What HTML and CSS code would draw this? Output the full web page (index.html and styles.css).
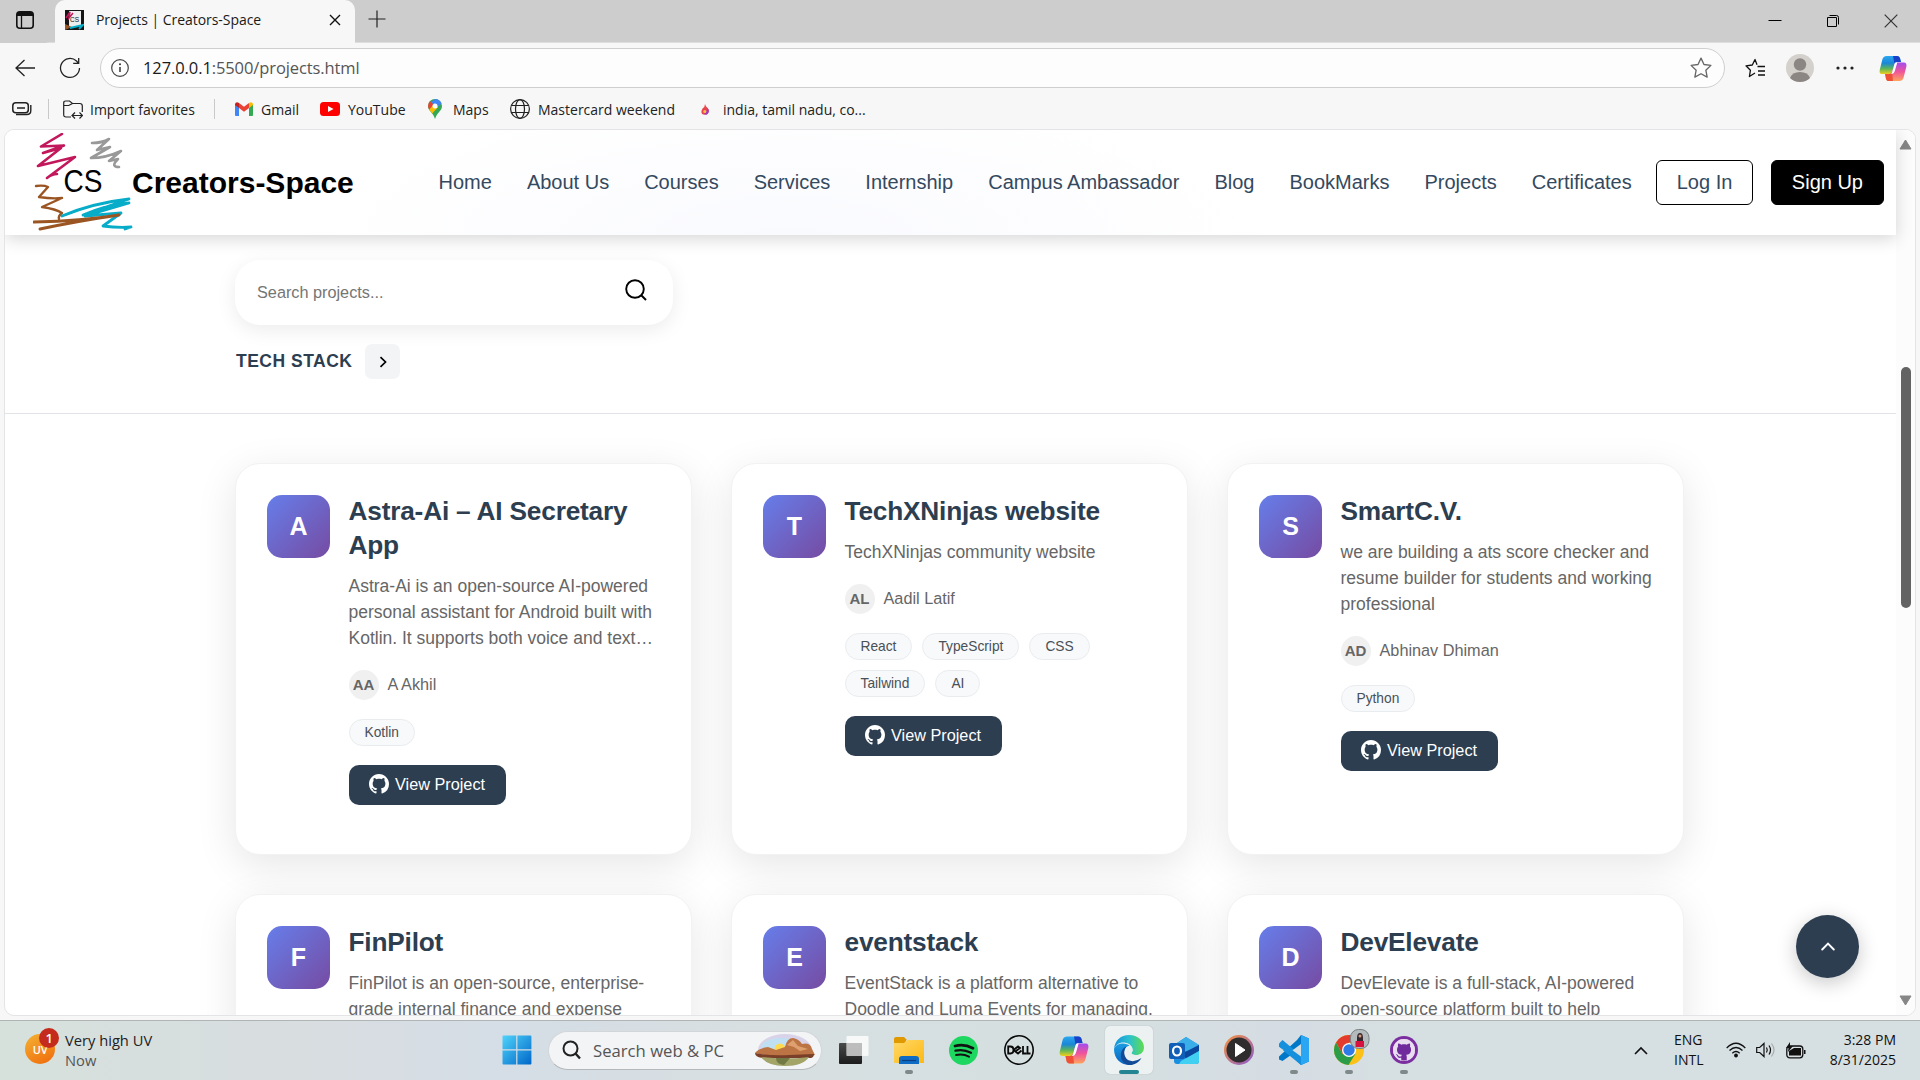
FILE: index.html
```html
<!DOCTYPE html>
<html lang="en">
<head>
<meta charset="utf-8">
<title>Projects | Creators-Space</title>
<link rel="stylesheet" href="styles.css">
</head>
<body>
<svg class="defs" aria-hidden="true">
  <defs>
    <linearGradient id="cpA" x1="0" y1="0" x2="0" y2="1"><stop offset="0" stop-color="#2aa8f0"/><stop offset=".4" stop-color="#1a86d8"/><stop offset=".7" stop-color="#5bb55a"/><stop offset="1" stop-color="#f2cf1c"/></linearGradient>
    <linearGradient id="cpB" x1="0" y1="0" x2="0" y2="1"><stop offset="0" stop-color="#a24bf0"/><stop offset=".5" stop-color="#f0559a"/><stop offset="1" stop-color="#ffa45c"/></linearGradient>
    <linearGradient id="win" x1="0" y1="0" x2="1" y2="1"><stop offset="0" stop-color="#4fd3fb"/><stop offset="1" stop-color="#0067c8"/></linearGradient>
    <linearGradient id="edgeTop" x1="0" y1="0" x2="1" y2="0"><stop offset="0" stop-color="#1490dc"/><stop offset=".5" stop-color="#2bc0d0"/><stop offset="1" stop-color="#5fdc4e"/></linearGradient>
    <linearGradient id="edgeL" x1="0" y1="0" x2="0" y2="1"><stop offset="0" stop-color="#1b9de2"/><stop offset="1" stop-color="#0a62c0"/></linearGradient>
    <linearGradient id="media" x1="0" y1="0" x2="1" y2="1"><stop offset="0" stop-color="#f7933c"/><stop offset="1" stop-color="#8a5ad0"/></linearGradient>
    <linearGradient id="folder" x1="0" y1="0" x2="1" y2="1"><stop offset="0" stop-color="#ffd968"/><stop offset="1" stop-color="#fdb813"/></linearGradient>
    <linearGradient id="tv" x1="0" y1="0" x2="0" y2="1"><stop offset="0" stop-color="#4a4a4a"/><stop offset="1" stop-color="#1c1c1c"/></linearGradient>
  </defs>
  <symbol id="github" viewBox="0 0 16 16"><path d="M8 0C3.58 0 0 3.58 0 8c0 3.54 2.29 6.53 5.47 7.59.4.07.55-.17.55-.38 0-.19-.01-.82-.01-1.49-2.01.37-2.53-.49-2.69-.94-.09-.23-.48-.94-.82-1.13-.28-.15-.68-.52-.01-.53.63-.01 1.08.58 1.23.82.72 1.21 1.87.87 2.33.66.07-.52.28-.87.51-1.07-1.78-.2-3.64-.89-3.64-3.95 0-.87.31-1.59.82-2.15-.08-.2-.36-1.02.08-2.12 0 0 .67-.21 2.2.82.64-.18 1.32-.27 2-.27s1.36.09 2 .27c1.53-1.04 2.2-.82 2.2-.82.44 1.1.16 1.92.08 2.12.51.56.82 1.27.82 2.15 0 3.07-1.87 3.75-3.65 3.95.29.25.54.73.54 1.48 0 1.07-.01 1.93-.01 2.2 0 .21.15.46.55.38A8.01 8.01 0 0 0 16 8c0-4.42-3.58-8-8-8z" fill="currentColor"/></symbol>
  <symbol id="copilot" viewBox="0 0 30 28"><path d="M8.500.5h11c1.600 0 2.600 1 3 2.500L23.500 7h-3c-2.200 0-3.500 1-4 3l-2.200 7.500c-.6 2-1.800 2.500-3.500 2.500H3.500C1 20 .2 18.200.8 15.500L3.500 4.500C4.100 2 5.500.5 8.500.5z" fill="url(#cpA)"/><path d="M15 .5h4.500c1.600 0 2.600 1 3 2.500L23.500 7h-3c-2 0-3.200.8-3.800 2.300z" fill="#1a3fc9"/><path d="M21.500 27.500h-11c-1.600 0-2.600-1-3-2.500L6.500 20h3.500c2.200 0 3.300-.5 4-2.500l2.300-7.500c.6-2 1.800-2.500 3.500-2.500h6.700c2.500 0 3.400 1.800 2.800 4.500l-2.800 11c-.6 2.500-2 4.500-5 4.500z" fill="url(#cpB)"/><path d="M15 27.500h-4.500c-1.600 0-2.600-1-3-2.500L6.500 20h3.500c2 0 3.300-.4 4-2z" fill="#ee5136"/><path d="M16.800 8.500c.5-1 1.500-1.200 2.900-1.200L17 16.500c-.8 2.500-2 3.600-4.500 3.500 1-.5 1.300-1.300 1.600-2.300z" fill="#fff"/></symbol>
  <symbol id="logo" viewBox="0 0 100 98"><g fill="none" stroke-linejoin="round" stroke-linecap="round"><path d="M29 1 8 13.500 31 12.500 10 20l18-5L5 33l37-9-28 21q5-4 10-4" stroke="#c2185b" stroke-width="2.600"/><path d="M59 10q10 0 17-4L64 17l13-3-19 11q15 0 30-7L76 28l9-2q-8 8 1 8" stroke="#999" stroke-width="2.600"/><path d="M3 53q8-1 12 1L6 64q13 2 23 1L9 74q14 2 20 6-4 3-3 6" stroke="#9b5523" stroke-width="2.400"/><path d="M29 83Q60 70 96 66L50 82Q74 72 96 70L52 83 88 80 70 93q15 2 28 1l-6 2" stroke="#07acc8" stroke-width="2.800"/><path d="M1 89Q50 88 86 82 45 88 7 96" stroke="#9b5523" stroke-width="2.900"/></g></symbol>
  <symbol id="star" viewBox="0 0 20 20"><path d="m10 1 2.700 5.800 6.300.8-4.600 4.400 1.200 6.300L10 15.200l-5.600 3.100L5.600 12 1 7.600l6.300-.8z" fill="none" stroke="currentColor" stroke-width="1.200" stroke-linejoin="round"/></symbol>
</svg>

<div class="tabstrip">
  <div class="tab-actions"><svg width="18" height="18" viewBox="0 0 18 18"><rect x=".8" y=".8" width="16.400" height="16.400" rx="3" fill="none" stroke="#111" stroke-width="1.600"/><path d="M1 5V3q0-2 2-2h12q2 0 2 2v2z" fill="#111"/><path d="M5.500 5v12" stroke="#111" stroke-width="1.300"/></svg></div>
  <div class="tab">
    <svg class="favicon" width="19" height="20" viewBox="0 0 19 20"><rect width="19" height="20" fill="#151515"/><rect x="4" y="1" width="12" height="16" fill="#eee"/><path d="M1 8 5 2l-1 6 4-5" stroke="#c2185b" stroke-width="1.500" fill="none"/><path d="m0 14 7 3-7 3z" fill="#9b5523"/><path d="m5 18 13-3-4 4" stroke="#07acc8" stroke-width="1.800" fill="none"/><text x="5" y="12" class="fav-text">CS</text></svg>
    <span class="tab-title">Projects | Creators-Space</span>
    <svg class="tab-close" width="12" height="12" viewBox="0 0 12 12"><path d="m1 1 10 10M11 1 1 11" stroke="#111" stroke-width="1.400"/></svg>
  </div>
  <svg class="new-tab" width="18" height="18" viewBox="0 0 18 18"><path d="M9 .5v17M.5 9h17" stroke="#222" stroke-width="1.200"/></svg>
  <div class="window-buttons">
    <svg width="14" height="14" viewBox="0 0 14 14"><path d="M.5 6.500h13" stroke="#000" stroke-width="1"/></svg>
    <svg width="14" height="14" viewBox="0 0 14 14"><path d="M1.500 3.500h9v9h-9z" fill="none" stroke="#000"/><path d="M3.500 1.500h7q2 0 2 2v7" fill="none" stroke="#000"/></svg>
    <svg width="14" height="14" viewBox="0 0 14 14"><path d="m.7.700 12.600 12.600M13.300.7.7 13.300" stroke="#333" stroke-width="1.200"/></svg>
  </div>
</div>

<div class="toolbar">
  <svg class="back" width="20" height="18" viewBox="0 0 20 18"><path d="M9.500 1 1 9l8.500 8M1 9h19" fill="none" stroke="#222" stroke-width="1.300"/></svg>
  <svg class="reload" width="22" height="22" viewBox="0 0 22 22"><path d="M20.500 11a9.500 9.500 0 1 1-3-7l2 2.200M19.700 1v5.300h-5.500" fill="none" stroke="#222" stroke-width="1.300"/></svg>
  <div class="address">
    <svg width="18" height="18" viewBox="0 0 18 18"><circle cx="9" cy="9" r="8.300" fill="none" stroke="#444" stroke-width="1.200"/><path d="M9 8v5" stroke="#333" stroke-width="1.500"/><circle cx="9" cy="5.300" r="1" fill="#333"/></svg>
    <span class="url"><b>127.0.0.1</b>:5500/projects.html</span>
    <svg class="fav-star" width="22" height="22"><use href="#star"/></svg>
  </div>
  <svg class="favorites" width="20" height="20" viewBox="0 0 20 20"><path d="M12 6.800 10 1.500 7.300 7 1 7.800l4.400 4.500-1 6.200L10 15M12.500 8.500H20M13 13h7M13 17h7" fill="none" stroke="#111" stroke-width="1.300" stroke-linejoin="round"/></svg>
  <svg class="profile" width="28" height="28" viewBox="0 0 28 28"><circle cx="14" cy="14" r="14" fill="#d4d1cd"/><circle cx="14" cy="10.500" r="6.200" fill="#8b8683"/><path d="M4 24q2-6 10-6t10 6q-4 4-10 4T4 24z" fill="#8b8683"/></svg>
  <svg class="dots" width="18" height="4" viewBox="0 0 18 4"><g fill="#222"><circle cx="2" cy="2" r="1.600"/><circle cx="9" cy="2" r="1.600"/><circle cx="16" cy="2" r="1.600"/></g></svg>
  <svg width="28" height="27"><use href="#copilot"/></svg>
</div>

<div class="bookmarks">
  <svg class="bm-first" width="20" height="14" viewBox="0 0 20 14"><rect x=".8" y=".8" width="15.500" height="10" rx="3" fill="none" stroke="#222" stroke-width="1.500"/><path d="M5 6h8M18.800 3v5.500q0 4-4 4H4" fill="none" stroke="#222" stroke-width="1.400"/></svg>
  <i class="sep"></i>
  <div class="bm bm-import"><svg width="20" height="19" viewBox="0 0 20 19"><path d="M8 17H3q-2.300 0-2.300-2.300V3Q.7 1 2.700 1h3.800l3 2.500h7.300q2.500 0 2.500 2.500v6M.7 5.500h5L9.500 3.500M9 15.500h10M12 12.500l-3 3 3 3M16.500 12.500l3 3-3 3" fill="none" stroke="#222" stroke-width="1.200"/></svg><span>Import favorites</span></div>
  <i class="sep"></i>
  <div class="bm bm-gmail"><svg width="18" height="14" viewBox="0 0 18 14"><path d="M0 2v11q0 1 1 1h3V5z" fill="#4285f4"/><path d="M18 2v11q0 1-1 1h-3V5z" fill="#34a853"/><path d="M14 1v5l4-3V2q-1-3-4-1z" fill="#fbbc04"/><path d="M4 6V1q-3-2-4 1v1z" fill="#c5221f"/><path d="M4 1v5l5 3.800L14 6V1L9 4.800z" fill="#ea4335"/></svg><span>Gmail</span></div>
  <div class="bm bm-youtube"><svg width="20" height="14" viewBox="0 0 20 14"><rect width="20" height="14" rx="3.500" fill="#f00"/><path d="m8 4 5.500 3L8 10z" fill="#fff"/></svg><span>YouTube</span></div>
  <div class="bm bm-maps"><svg width="14" height="20" viewBox="0 0 14 20"><path d="M7 0a7 7 0 0 0-7 7c0 5 5 6 7 13 2-7 7-8 7-13a7 7 0 0 0-7-7z" fill="#34a853"/><path d="M7 0a7 7 0 0 1 6.500 4.500L8 9 3 3z" fill="#4285f4"/><path d="M2 2.300 6 6 1.500 11Q-1.500 6 2 2.300z" fill="#ea4335"/><path d="m1.200 10.500 5-5.500 4 3-6 6.500z" fill="#fbbc04"/><circle cx="7" cy="7" r="2.500" fill="#fff"/></svg><span>Maps</span></div>
  <div class="bm bm-master"><svg width="20" height="20" viewBox="0 0 20 20"><g fill="none" stroke="#222" stroke-width="1.200"><circle cx="10" cy="10" r="9.400"/><ellipse cx="10" cy="10" rx="4.500" ry="9.400"/><path d="M1.500 6.500h17M1.500 13.500h17"/></g></svg><span>Mastercard weekend</span></div>
  <div class="bm bm-india"><svg width="8" height="11" viewBox="0 0 8 11"><path d="M4 0q0 3-2.500 4.500Q-1 9 2 10.500h4Q9.500 7 6.500 4 4.500 2.500 4 0z" fill="#e8454e"/><path d="M6.500 4Q9.500 7 6 10.500H3q3-3 3.500-6.500z" fill="#a03ac0"/><circle cx="3.800" cy="7.500" r="1.500" fill="#ffc247"/></svg><span>india, tamil nadu, co...</span></div>
</div>

<div class="viewport">
  <div class="page">
    <header class="site-header">
      <svg class="brand-logo" width="100" height="98"><use href="#logo"/><text x="30.500" y="59" class="brand-cs" textLength="39" lengthAdjust="spacingAndGlyphs">CS</text></svg>
      <span class="brand">Creators-Space</span>
      <nav class="nav"><a>Home</a><a>About Us</a><a>Courses</a><a>Services</a><a>Internship</a><a>Campus Ambassador</a><a>Blog</a><a>BookMarks</a><a>Projects</a><a>Certificates</a></nav>
      <a class="btn-login">Log In</a>
      <a class="btn-signup">Sign Up</a>
    </header>

    <section class="filters">
      <div class="search"><span>Search projects...</span><svg width="22" height="22" viewBox="0 0 22 22"><circle cx="10" cy="10" r="8.800" fill="none" stroke="#000" stroke-width="1.900"/><path d="m16 16 5 5" stroke="#000" stroke-width="1.900"/></svg></div>
      <div class="stack"><span>TECH STACK</span><div class="stack-toggle"><svg width="8" height="12" viewBox="0 0 8 12"><path d="m1.500 1.200 5 4.800-5 4.800" fill="none" stroke="#000" stroke-width="1.700"/></svg></div></div>
    </section>

    <main class="grid">
      <article class="card">
        <div class="letter">A</div>
        <div class="info">
          <h3>Astra-Ai – AI Secretary App</h3>
          <p>Astra-Ai is an open-source AI-powered<br>personal assistant for Android built with<br>Kotlin. It supports both voice and text…</p>
          <div class="author"><b>AA</b><span>A Akhil</span></div>
          <div class="tags"><span>Kotlin</span></div>
          <a class="view"><svg width="20" height="20"><use href="#github"/></svg>View Project</a>
        </div>
      </article>
      <article class="card">
        <div class="letter">T</div>
        <div class="info">
          <h3>TechXNinjas website</h3>
          <p>TechXNinjas community website</p>
          <div class="author"><b>AL</b><span>Aadil Latif</span></div>
          <div class="tags"><span>React</span><span>TypeScript</span><span>CSS</span><span>Tailwind</span><span>AI</span></div>
          <a class="view"><svg width="20" height="20"><use href="#github"/></svg>View Project</a>
        </div>
      </article>
      <article class="card">
        <div class="letter">S</div>
        <div class="info">
          <h3>SmartC.V.</h3>
          <p>we are building a ats score checker and<br>resume builder for students and working<br>professional</p>
          <div class="author"><b>AD</b><span>Abhinav Dhiman</span></div>
          <div class="tags"><span>Python</span></div>
          <a class="view"><svg width="20" height="20"><use href="#github"/></svg>View Project</a>
        </div>
      </article>
      <article class="card">
        <div class="letter">F</div>
        <div class="info"><h3>FinPilot</h3><p>FinPilot is an open-source, enterprise-<br>grade internal finance and expense</p></div>
      </article>
      <article class="card">
        <div class="letter">E</div>
        <div class="info"><h3>eventstack</h3><p>EventStack is a platform alternative to<br>Doodle and Luma Events for managing.</p></div>
      </article>
      <article class="card">
        <div class="letter">D</div>
        <div class="info"><h3>DevElevate</h3><p>DevElevate is a full-stack, AI-powered<br>open-source platform built to help</p></div>
      </article>
    </main>
  </div>
  <div class="scrollbar">
    <svg width="13" height="11" viewBox="0 0 13 11"><path d="M6.500 1 12 10H1z" fill="#868686" stroke="#868686" stroke-linejoin="round"/></svg>
    <i class="thumb"></i>
    <svg width="13" height="11" viewBox="0 0 13 11"><path d="M6.500 10 12 1H1z" fill="#868686" stroke="#868686" stroke-linejoin="round"/></svg>
  </div>
  <div class="to-top"><svg width="14" height="9" viewBox="0 0 14 9"><path d="m1.200 7.500 5.800-6 5.800 6" fill="none" stroke="#fff" stroke-width="1.900" stroke-linecap="round"/></svg></div>
</div>

<footer class="taskbar">
  <div class="weather">
    <div class="uv">UV<b>1</b></div>
    <div class="weather-text"><span>Very high UV</span><small>Now</small></div>
  </div>
  <div class="slot"><svg width="30" height="30" viewBox="0 0 30 30"><path d="M1.500.5h12.700v13.700H.5V1.500q0-1 1-1zM15.400.5h13q1 0 1 1v12.700h-14zM.5 15.400h13.700v14H1.500q-1 0-1-1zM15.400 15.400h14v13q0 1-1 1h-13z" fill="url(#win)"/></svg></div>
  <div class="task-search">
    <svg width="19" height="20" viewBox="0 0 19 20"><circle cx="8.500" cy="8.500" r="7" fill="none" stroke="#222" stroke-width="2"/><path d="m13.500 13.500 4.500 5" stroke="#222" stroke-width="2.400"/></svg>
    <span>Search web &amp; PC</span>
    <svg width="62" height="32" viewBox="0 0 62 32"><ellipse cx="31" cy="16" rx="27" ry="16" fill="#d9d3ea"/><ellipse cx="27" cy="14" rx="20" ry="10" fill="#bfe0f3"/><circle cx="26" cy="15" r="5.500" fill="#ffd94f"/><path d="M1 19q4-5 13-6l8 3 9-3q2-9 8-9 6 1 9 6 8-2 10 5l3 6q-30 5-60-2z" fill="#bd7444"/><path d="m33 11 6-5 5 6 10 3-8 2-6-4z" fill="#dfa070"/><path d="M1 19q15 3 34 2l25-1q0 3-3 4H8q-7-1-7-5z" fill="#7a3f28"/><path d="M7 23q24 3 48 0-6 9-24 9T7 23z" fill="#a2a468"/><path d="m22 24 14 0-6 7q-8-1-8-7z" fill="#717a45"/></svg>
  </div>
  <div class="slot"><svg width="30" height="28" viewBox="0 0 30 28"><rect y="7" width="23" height="21" rx="1" fill="url(#tv)"/><rect x="7.500" y="0" width="22" height="20" rx="1" fill="#fff" fill-opacity=".8"/><path d="M7.500 7H23v13H7.500z" fill="#aaa" fill-opacity=".6"/></svg></div>
  <div class="slot running"><svg width="30" height="27" viewBox="0 0 30 27"><path d="M0 2q0-2 2-2h8l3 3h-1v6H0z" fill="#e09a00"/><path d="M0 6h10l3-3h16q1 0 1 1v22H1q-1 0-1-1z" fill="url(#folder)"/><path d="M5 27v-5q0-3 3-3h14q3 0 3 3v5z" fill="#0f6cc4"/><path d="M8 23.500h14" stroke="#0a3e85" stroke-width="1.200"/></svg></div>
  <div class="slot"><svg width="29" height="29" viewBox="0 0 29 29"><circle cx="14.500" cy="14.500" r="14.500" fill="#1ed760"/><g fill="none" stroke="#111" stroke-linecap="round"><path d="M6 10q9-2.500 18 2.200" stroke-width="2.800"/><path d="M6.500 14.700q8-2 15.500 2" stroke-width="2.300"/><path d="M7 19q7-1.700 13 1.700" stroke-width="1.900"/></g></svg></div>
  <div class="slot"><svg width="30" height="30" viewBox="0 0 30 30"><circle cx="15" cy="15" r="14.200" fill="none" stroke="#0a0a0a" stroke-width="1.600"/><g fill="none" stroke="#0a0a0a" stroke-width="1.800"><path d="M4.200 11.500h2.300q3 0 3 3.500t-3 3.500H4.200z"/><path d="m9.500 15 4.500-3.500 2 1.500-4 3M9.500 15l4.500 3.500 3.500-3M19 11v7.500h3.500M23.500 11v7.500h3"/></g></svg></div>
  <div class="slot"><svg width="30" height="28"><use href="#copilot"/></svg></div>
  <div class="slot active"><svg width="30" height="30" viewBox="0 0 30 30"><path d="M0 14C1 5 7 0 15 0c9 0 15 6 15 12.500 0 5-4 7.500-8 7.500-3 0-5-1-4.500-2.500 1-1 1.500-2 1-4C17.500 9.500 13 7.500 9 7.500 5 7.500 1.500 10 0 14z" fill="url(#edgeTop)"/><path d="M0 14c1.500-4 5-5.500 9-5.500 3 0 5 1 6.500 2.200C12 11 10 14.500 10 18c0 6 4 10.500 9 11.300C9 32 0 25 0 14z" fill="url(#edgeL)"/><path d="M12.500 11.500C9 15 9.500 22 14 25q6 3 13.500-2C25 27.500 20 30 16 30 10 29.500 6 25 7 18.500c.5-3.500 2.500-6 5.500-7z" fill="#114b98"/><path d="M13.500 12.200q4.500-.8 5 2.300.2 2-1.200 3.500.5 2 4.500 2.200 2.500 0 5-.8-3.500 4.500-8 3.400-4.800-1.300-6.300-5.500-.8-3 1-5.100z" fill="#e9efef"/></svg></div>
  <div class="slot"><svg width="30" height="27" viewBox="0 0 30 27"><path d="M5 8 17 0l13 8v16q0 3-3 3H8q-3 0-3-3z" fill="#1a8fe0"/><path d="m17 0 13 8-12 7L5 8z" fill="#3aaee8"/><path d="m14 16 16-8v6L17 22z" fill="#0b479c"/><path d="m12 24 18-10v10q0 3-3 3H10z" fill="#41d0f2"/><rect y="6" width="16" height="16" rx="2" fill="#0f5fb8"/><ellipse cx="8" cy="14" rx="4" ry="4.500" fill="none" stroke="#fff" stroke-width="2.200"/></svg></div>
  <div class="slot"><svg width="30" height="30" viewBox="0 0 30 30"><circle cx="15" cy="15" r="15" fill="url(#media)"/><circle cx="15" cy="15" r="12.500" fill="#2e2c2c"/><path d="m11.500 8.500 9.500 6.500-9.500 6.500z" fill="#fff" stroke="#fff" stroke-linejoin="round"/></svg></div>
  <div class="slot running"><svg width="30" height="30" viewBox="0 0 30 30"><path d="M22 0 30 3.500v23L22 30 12 20 3.500 26 0 24.500v-3L18 5z" fill="#0078c8"/><path d="M0 8.500 3.500 5 22 20.500V30L0 12z" fill="#1590dd"/><path d="M22 0 30 3.500v23L22 30z" fill="#2ba6f2"/><path d="m22 9-8.500 6.200L22 21.500z" fill="#d6dfe1"/><path d="M0 12v8l4.500-5z" fill="#d6dfe1"/></svg></div>
  <div class="slot running"><svg class="chrome" width="30" height="30" viewBox="0 6 30 30"><circle cx="15" cy="21" r="15" fill="#fbc116"/><path d="M2 13.500A15 15 0 0 1 28 13.500H15L8.500 25z" fill="#e33b2e"/><path d="M2 13.500A15 15 0 0 0 14.500 36L21.500 24.700 8.500 25z" fill="#2b9c48"/><circle cx="15" cy="21" r="7" fill="#fff"/><circle cx="15" cy="21" r="5.700" fill="#2f7ce8"/><rect x="16.500" y=".5" width="18.500" height="19" rx="8" fill="#b4bbbd" stroke="#798084"/><path d="M23 17V9q0-5 3-5t3 5v8z" fill="#352a30"/><path d="M21.500 12h8.500v6h-8.500z" fill="#d8123f"/><circle cx="26" cy="7" r="1.500" fill="#d89a80"/></svg></div>
  <div class="slot running"><svg width="28" height="28" viewBox="0 0 28 28"><circle cx="14" cy="14" r="14" fill="#7a2ea0"/><circle cx="14" cy="14" r="11" fill="#e9def0"/><svg x="3" y="3" width="22" height="22" color="#e9def0"><circle cx="11" cy="11" r="10.500" fill="#6f2a9c"/><use href="#github"/></svg></svg></div>

  <div class="tray">
    <svg class="tray-up" width="14" height="9" viewBox="0 0 14 9"><path d="m1 8 6-6 6 6" fill="none" stroke="#111" stroke-width="1.600"/></svg>
    <div class="lang"><span>ENG</span><span>INTL</span></div>
    <svg class="wifi" width="20" height="16" viewBox="0 0 20 16"><g fill="none" stroke="#111" stroke-width="1.300"><path d="M.7 6Q10-3.500 19.300 6M3.500 8.500q6.500-6 13 0M6.300 11.200q3.700-3.400 7.400 0"/></g><circle cx="10" cy="13.500" r="1.900" fill="#111"/></svg>
    <svg class="volume" width="20" height="16" viewBox="0 0 20 16"><g fill="none" stroke="#111" stroke-width="1.200"><path d="M.7 5.500h3L8 1.500v13l-4.300-4h-3zM10.500 5.500q1.500 2.500 0 5M13 3.500q3 4.500 0 9"/><path d="M15.500 1.500q5 6.500 0 13" stroke="#aaa"/></g></svg>
    <svg class="battery" width="20" height="17" viewBox="0 0 20 17"><rect x=".8" y="4" width="16" height="11.800" rx="3" fill="none" stroke="#111" stroke-width="1.300"/><path d="M3 13.500V9l5-3h7v7.500zM18 8h1.500v4H18zM4 0 0 6h2.500L2 10l5-6H4z" fill="#111"/></svg>
    <div class="clock"><span>3:28 PM</span><span>8/31/2025</span></div>
  </div>
</footer>
</body>
</html>
```
FILE: styles.css
```css
* { box-sizing: border-box; }
body {
  margin: 0;
  width: 1920px;
  height: 1080px;
  overflow: hidden;
  display: flex;
  flex-direction: column;
  background: #f7f7f7;
  font-family: "Open Sans", "Noto Sans", sans-serif;
  color: #222;
}
svg { display: block; flex: none; }
.defs { position: absolute; width: 0; height: 0; }

/* Tab strip */
.tabstrip { height: 43px; flex: none; display: flex; align-items: center; background: #cdcdcd; border-bottom: 1px solid #dedede; }
.tab-actions { width: 55px; height: 43px; padding: 11px 0 0 16px; border-bottom-right-radius: 10px; background: #cdcdcd; }
.tab { width: 300px; height: 43px; margin-bottom: -1px; padding: 0 14px 3px 10px; display: flex; align-items: center; background: #f7f7f7; border-radius: 10px 10px 0 0; }
.fav-text { font: 6.500px "Liberation Sans", sans-serif; fill: #111; }
.tab-title { margin: -2px 0 0 12px; font-size: 14px; letter-spacing: -.05px; color: #1a1a1a; white-space: nowrap; }
.tab-close { margin-left: auto; }
.new-tab { margin: 0 0 4px 13px; }
.window-buttons { margin-left: auto; padding-right: 22px; display: flex; gap: 44px; }

/* Toolbar */
.toolbar { height: 46px; flex: none; padding: 4px 13px 0 15px; display: flex; align-items: center; }
.reload { margin-left: 24px; }
.address { width: 1626px; height: 40px; margin: 0 0 0 19px; padding: 0 12px 0 10px; display: flex; align-items: center; background: #fdfdfd; border: 1px solid #cfcfcf; border-radius: 20px; }
.url { margin: -2px 0 0 14px; font-size: 16.500px; letter-spacing: -.1px; color: #555; }
.url b { font-weight: 400; color: #1a1a1a; }
.fav-star { margin-left: auto; color: #666; }
.favorites { margin-left: 20px; }
.profile { margin-left: 21px; }
.dots { margin: 0 25px 0 22px; }
.fav-star, .favorites { overflow: visible; }

/* Bookmarks */
.bookmarks { height: 40px; flex: none; padding-left: 12px; display: flex; align-items: center; font-size: 14px; letter-spacing: 0; white-space: nowrap; }
.sep { width: 1px; height: 20px; background: #c9c9c9; }
.bm-first { margin-right: 16px; }
.bm { display: flex; align-items: center; }
.bm-import { width: 165px; padding-left: 14px; gap: 7px; }
.bm-gmail { width: 105px; padding-left: 20px; gap: 8px; }
.bm-youtube { width: 108px; gap: 8px; }
.bm-maps { width: 82px; gap: 11px; }
.bm-master { width: 191px; gap: 8px; }
.bm-india { gap: 14px; }

/* Web page */
.viewport { position: relative; width: 1912px; height: 887px; margin-left: 4px; flex: none; display: flex; background: #fff; border: 1px solid #e4e4e6; border-radius: 10px; overflow: hidden; }
.page { width: 1891px; flex: none; font-family: "Liberation Sans", Arial, sans-serif; }
.site-header {
  position: relative;
  height: 105px;
  padding: 0 12px 0 28px;
  display: flex;
  align-items: center;
  background: radial-gradient(ellipse 480px 150px at 780px 110px, #f9fafe, #fff);
  box-shadow: 0 4px 16px rgba(0, 0, 0, .16);
}
.brand-logo { margin-top: -2px; }
.brand-cs { font-size: 32px; fill: #000; }
.brand { font-size: 30px; font-weight: 700; color: #000; margin: 1px 0 0 -1px; }
.nav { margin-left: auto; display: flex; gap: 35px; margin-right: 24px; font-size: 20px; color: #34495e; white-space: nowrap; }
.btn-login, .btn-signup { height: 45px; line-height: 43px; border: 1px solid #000; border-radius: 6px; font-size: 20px; white-space: nowrap; }
.btn-login { padding: 0 20px; color: #34495e; }
.btn-signup { margin-left: 18px; padding: 0 20px 0 19.500px; color: #fff; background: #000; }

.filters { height: 179px; padding: 25px 0 0 230px; border-bottom: 1px solid #e1e4e8; }
.search { width: 438px; height: 65px; padding: 0 26px 0 22px; display: flex; align-items: center; justify-content: space-between; border-radius: 25px; background: #fff; box-shadow: 0 5px 20px rgba(0, 0, 0, .08); font-size: 16.250px; color: #757575; }
.search svg { margin-top: -5px; }
.stack { margin-top: 19px; padding-left: 1px; display: flex; align-items: center; gap: 12px; font-size: 17.500px; font-weight: 700; letter-spacing: .5px; color: #2c3e50; }
.stack-toggle { width: 35px; height: 35px; margin-left: 1px; border-radius: 7px; background: #f3f4f6; display: grid; place-items: center; padding-left: 1px; }

.grid { padding: 49px 0 0 230px; display: grid; grid-template-columns: repeat(3, 457px); gap: 39px; }
.card { height: 392px; padding: 31px 30px 0 31px; display: flex; align-items: flex-start; gap: 18.500px; background: #fff; border: 1px solid #f2f2f2; border-radius: 25px; box-shadow: 0 10px 40px rgba(0, 0, 0, .1); }
.letter { width: 63px; height: 63px; flex: none; border-radius: 15px; background: linear-gradient(135deg, #667eea, #764ba2); color: #fff; font-size: 25px; font-weight: 700; display: grid; place-items: center; }
.info { flex: 1; min-width: 0; }
.info h3 { margin: -1px 0 11px; font-size: 26.250px; line-height: 34.100px; letter-spacing: -.2px; color: #2c3e50; }
.info p { margin: 0 -10px 18.500px 0; font-size: 17.500px; line-height: 26.100px; color: #666; white-space: nowrap; }
.author { height: 30px; display: flex; align-items: center; gap: 9px; font-size: 16.250px; color: #666; }
.author b { width: 30px; height: 30px; border-radius: 50%; background: #f0f0f0; font-size: 15px; display: grid; place-items: center; }
.tags { margin-top: 19px; display: flex; flex-wrap: wrap; gap: 10px; }
.tags span { height: 27px; line-height: 25px; padding: 0 15px; border: 1px solid #e9ecef; border-radius: 14px; background: #f8f9fa; font-size: 13.750px; color: #495057; }
.view { margin-top: 19px; width: 157px; height: 40px; padding: 0 0 1px 20px; display: flex; align-items: center; gap: 6.500px; border-radius: 10px; background: #2c3e50; color: #fff; font-size: 16.250px; white-space: nowrap; }

.scrollbar { width: 19px; flex: none; background: #fcfcfc; padding: 9px 3px 9px; display: flex; flex-direction: column; align-items: center; justify-content: space-between; }
.thumb { width: 10px; height: 241px; border-radius: 5px; background: #636363; margin-bottom: 171px; }
.to-top { position: absolute; right: 56px; bottom: 37px; width: 63px; height: 63px; border-radius: 50%; background: #2c3e50; display: grid; place-items: center; box-shadow: 0 5px 20px rgba(0, 0, 0, .22); }

/* Taskbar */
.taskbar { height: 60px; margin-top: auto; flex: none; display: flex; align-items: center; border-top: 1px solid #b0b4b4; background: linear-gradient(90deg, #d6e1dc, #d8dde0 300px, #d5dde6 500px, #d7dfe1 750px, #d5dfe0 1100px, #d5dde4 1290px, #d6dfe1 1400px); }
.weather { width: 489px; padding-left: 25px; display: flex; align-items: center; }
.uv { position: relative; width: 30px; height: 30px; margin-top: -3px; border-radius: 50%; background: linear-gradient(150deg, #f3b233, #f0690a); color: #fff; font-size: 11px; font-weight: 600; line-height: 31px; text-align: center; letter-spacing: -.3px; }
.uv b { position: absolute; left: 14px; top: -6px; width: 20px; height: 20px; border-radius: 50%; background: #c42b1c; font-size: 13px; font-weight: 600; line-height: 20px; }
.weather-text { margin: -1px 0 0 10px; display: flex; flex-direction: column; font-size: 14.700px; line-height: 20px; white-space: nowrap; }
.weather-text small { font-size: 14.700px; color: #555; }
.slot { position: relative; width: 55px; height: 48px; flex: none; display: grid; place-items: center; margin-top: -1px; }
.running::after, .active::after { content: ""; position: absolute; left: 24px; bottom: 0; width: 8px; height: 4px; border-radius: 2px; background: #80898a; }
.active::before { content: ""; position: absolute; inset: 0 3px 0 4px; border-radius: 5px; background: rgba(255, 255, 255, .55); box-shadow: 0 0 1px rgba(0, 0, 0, .3); }
.active svg { position: relative; }
.active::after { left: 18px; width: 20px; background: #238593; }
.chrome { overflow: visible; }
.task-search { width: 274px; height: 39px; margin: -1px 4px 0; padding: 0 5px 0 13px; display: flex; align-items: center; border-radius: 20px; background: #f3f4f6; border: 1px solid #d3d6d8; border-bottom-color: #b5b8ba; }
.task-search span { flex: 1; margin-left: 12px; font-size: 16.700px; color: #555; white-space: nowrap; }
.tray { margin-left: auto; padding-right: 24px; display: flex; align-items: center; font-size: 14px; line-height: 20px; color: #111; }
.tray > svg { margin-top: -1px; }
.tray div { display: flex; flex-direction: column; margin-top: -1px; }
.tray .lang { width: 52px; margin-left: 26px; }
.tray .volume { margin-left: 10px; }
.tray .battery { margin-left: 10px; }
.tray .clock { width: 90px; text-align: right; letter-spacing: 0; }
```
